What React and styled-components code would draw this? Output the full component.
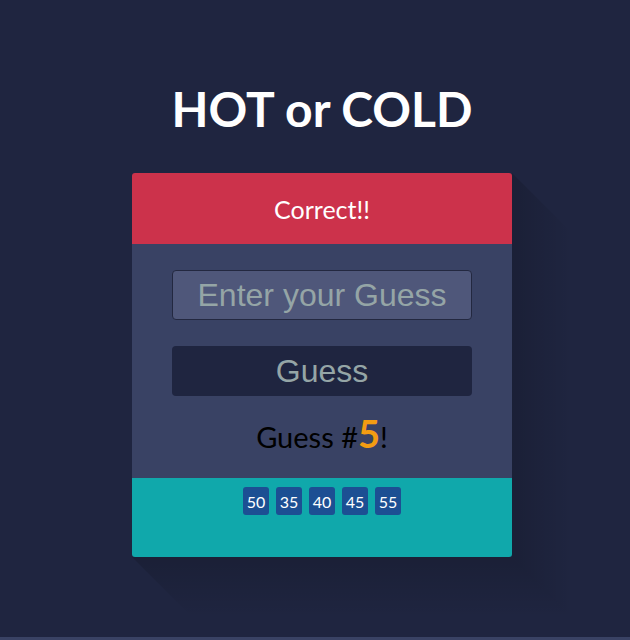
import React from "react";
import styled, { createGlobalStyle } from "styled-components";

const GlobalStyle = createGlobalStyle`
  html, body {
    margin: 0;
    background: #394264;
  }
  * { box-sizing: border-box; }
`;

const Page = styled.div`
  height: 637px;
  background: #1f2540;
  padding: 80px 0 0 14px;
  font-family: Lato, "Open Sans", sans-serif;
  overflow: hidden;
`;

const Title = styled.h1`
  margin: 0;
  font-size: 48px;
  line-height: 58px;
  font-weight: 700;
  color: #fff;
  text-align: center;
`;

/* long flat shadow towards bottom right, fading with distance */
const Card = styled.div`
  position: relative;
  z-index: 0;
  width: 380px;
  margin: 35px auto 0;

  &::before,
  &::after {
    content: "";
    position: absolute;
    z-index: -1;
  }
  &::before {
    left: 100%;
    top: 0;
    width: 60px;
    height: calc(100% + 60px);
    background: linear-gradient(to right, rgba(0, 0, 0, 0.15), rgba(0, 0, 0, 0));
    clip-path: polygon(0 0, 100% 60px, 100% 100%, 0 calc(100% - 60px));
  }
  &::after {
    top: 100%;
    left: 0;
    width: calc(100% + 60px);
    height: 60px;
    background: linear-gradient(to bottom, rgba(0, 0, 0, 0.15), rgba(0, 0, 0, 0));
    clip-path: polygon(0 0, calc(100% - 60px) 0, 100% 100%, 60px 100%);
  }
`;

const Header = styled.div`
  height: 71px;
  background: #cc324b;
  border-radius: 3px 3px 0 0;
  color: #fff;
  font-size: 25px;
  display: flex;
  align-items: center;
  justify-content: center;
`;

const Body = styled.div`
  background: #394264;
  padding: 26px 40px 0;
  height: 234px;
  display: flex;
  flex-direction: column;
  align-items: center;
`;

const GuessInput = styled.input`
  width: 300px;
  height: 50px;
  background: #4f577a;
  border: 1px solid #232840;
  border-radius: 4px;
  font-family: "Liberation Sans", Arial, sans-serif;
  font-size: 32px;
  color: #95a5a6;
  text-align: center;
  outline: none;
  &::placeholder { color: #95a5a6; }
`;

const GuessButton = styled.button`
  width: 300px;
  height: 50px;
  margin-top: 26px;
  background: #1f2540;
  border: none;
  border-radius: 4px;
  font-family: "Liberation Sans", Arial, sans-serif;
  font-size: 32px;
  color: #95a5a6;
  cursor: pointer;
`;

const Count = styled.p`
  margin: 15px 0 0;
  font-size: 29px;
  line-height: 44px;
  color: #000;
`;

const Number = styled.span`
  color: #f39c12;
  font-size: 38px;
  font-weight: 700;
`;

const History = styled.ul`
  margin: 0;
  list-style: none;
  height: 79px;
  background: #10a8ab;
  border-radius: 0 0 3px 3px;
  padding: 9px 0 0;
  display: flex;
  justify-content: center;
  gap: 7px;
`;

const Badge = styled.li`
  width: 26px;
  height: 28px;
  border-radius: 3px;
  background: #1c4f93;
  color: #fff;
  font-size: 16px;
  display: flex;
  align-items: center;
  justify-content: center;
`;

const guesses = [50, 35, 40, 45, 55];

export default function App() {
  return (
    <Page>
      <GlobalStyle />
      <Title>HOT or COLD</Title>
      <Card>
        <Header>Correct!!</Header>
        <Body>
          <GuessInput placeholder="Enter your Guess" />
          <GuessButton>Guess</GuessButton>
          <Count>
            Guess #<Number>5</Number>!
          </Count>
        </Body>
        <History>
          {guesses.map((g) => (
            <Badge key={g}>{g}</Badge>
          ))}
        </History>
      </Card>
    </Page>
  );
}
